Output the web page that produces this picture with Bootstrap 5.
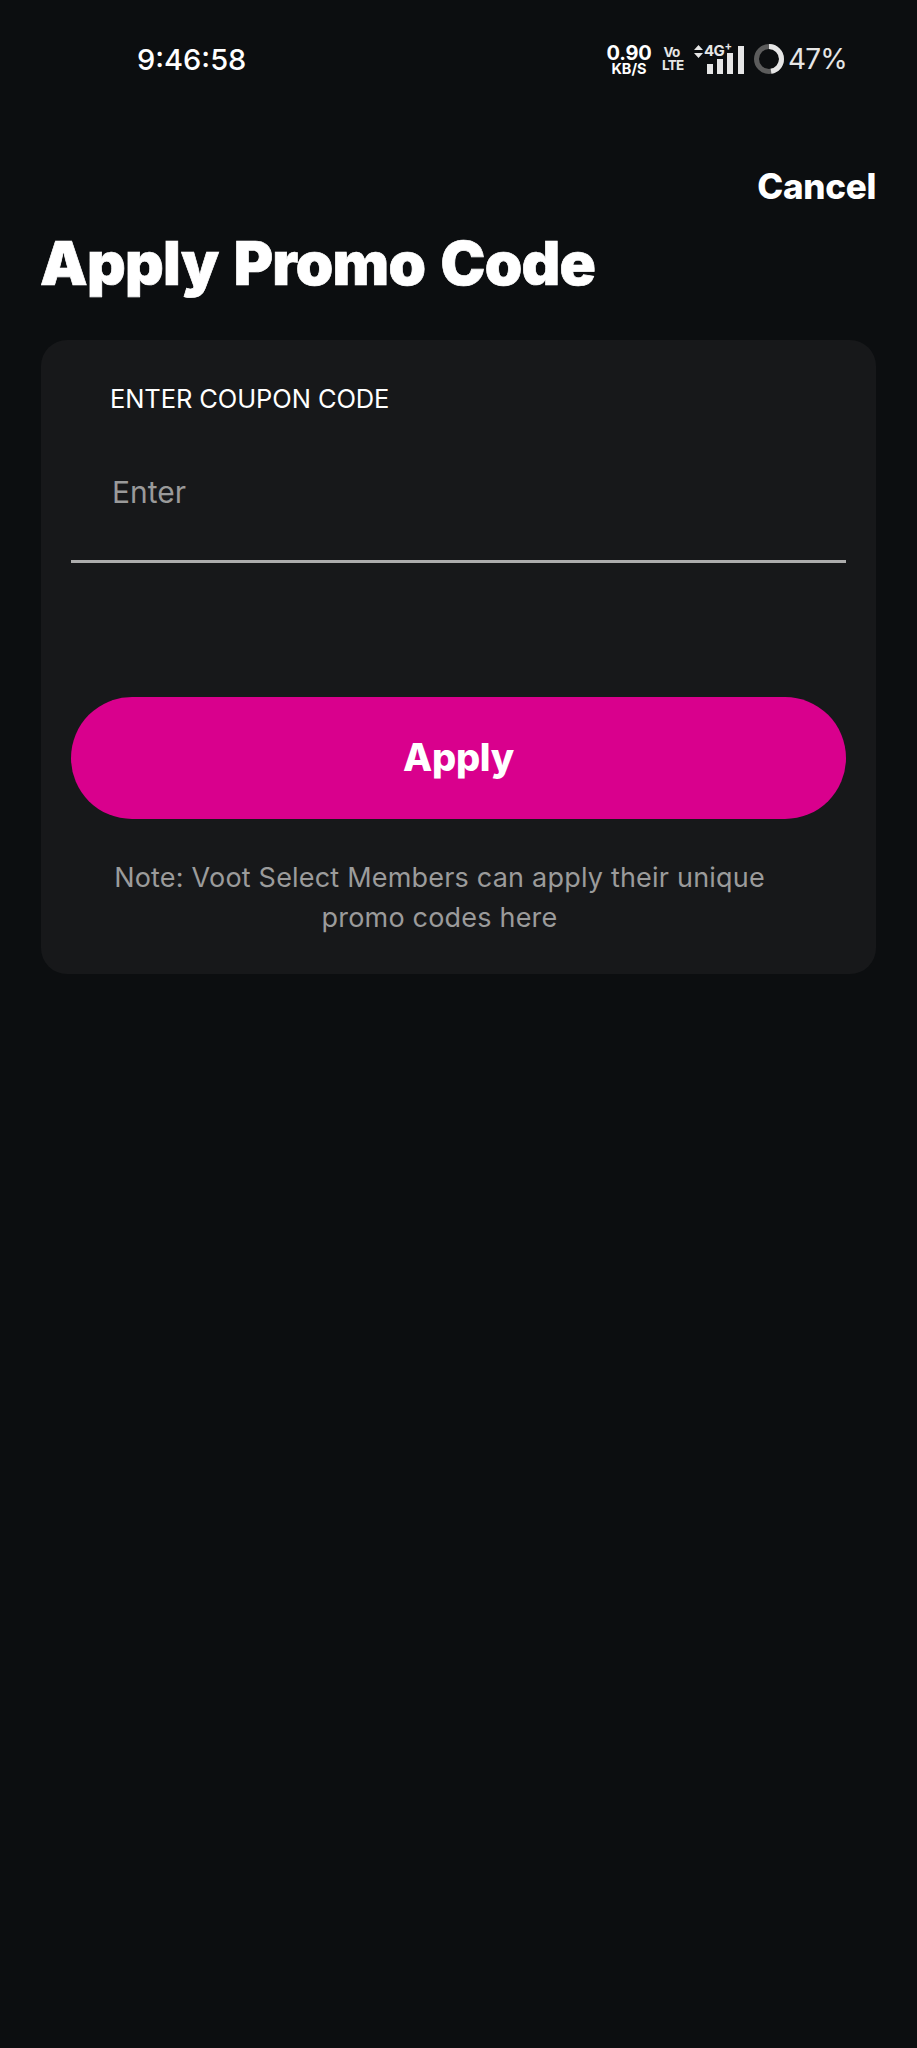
<!DOCTYPE html>
<html lang="en">
<head>
  <meta charset="UTF-8">
  <meta name="viewport" content="width=device-width, initial-scale=1.0">
  <title>Apply Promo Code</title>
  <link href="https://cdn.jsdelivr.net/npm/bootstrap@5.3.0/dist/css/bootstrap.min.css" rel="stylesheet">
  <style>
    body { background: #0c0e10; font-family: Inter, "Liberation Sans", sans-serif; color: #fff; height: 2048px; }
    .status-row { height: 118px; padding: 0 70px 0 137px; }
    .status-time { font-size: 29px; font-weight: 500; line-height: 1; margin-right: auto; }
    .stat-speed { width: 50px; text-align: center; line-height: 1; margin-right: 8px; }
    .stat-speed b { display: block; font-size: 20px; line-height: 18px; font-weight: 700; height: 18px; letter-spacing: -.2px; }
    .stat-speed span { display: block; font-size: 14.5px; line-height: 13px; font-weight: 700; }
    .stat-volte { width: 19px; text-align: center; font-size: 13.5px; font-weight: 700; line-height: 13px; margin-right: 12px; color: #e6e6e6; letter-spacing: -.7px; }
    .stat-net { width: 53px; height: 30px; }
    .stat-net-label { left: 11px; top: -1px; font-size: 15px; font-weight: 700; line-height: 16px; color: #e6e6e6; letter-spacing: -.5px; }
    .stat-battery { font-size: 28px; line-height: 1; color: #e6e6e6; margin-left: 4px; letter-spacing: -.8px; }
    .head-area { padding: 51px 41px 0 40px; }
    .cancel-link { color: #fff; font-size: 35px; font-weight: 800; line-height: 1; letter-spacing: -.3px; text-decoration: none; }
    .page-title { font-size: 60px; font-weight: 900; line-height: 1; margin: 28px 0 0; letter-spacing: -.7px; word-spacing: 4px; -webkit-text-stroke: .7px #fff; }
    .coupon-panel { margin: 47px 41px 0; height: 634px; background: #17181a; border-radius: 26px; padding: 46px 30px 0; }
    .coupon-label { display: block; font-size: 25.5px; line-height: 1; margin: 0 0 0 39px; letter-spacing: -.1px; }
    .coupon-input { background: transparent; border: 0; border-bottom: 3px solid #adadad; border-radius: 0; color: #fff; font-size: 30px; line-height: 36px; padding: 62px 41px 50px; height: auto; }
    .coupon-input::placeholder { color: #9a9a9a; opacity: 1; }
    .coupon-input:focus { background: transparent; color: #fff; box-shadow: none; border-color: #adadad; }
    .apply-btn { background: #d9008d; border: 0; border-radius: 61px; color: #fff; font-size: 38px; font-weight: 800; height: 122px; margin-top: 134px; letter-spacing: -.3px; }
    .apply-btn:hover { background: #d9008d; color: #fff; }
    .coupon-note { color: #9b9b9b; font-size: 27px; line-height: 40px; text-align: center; margin: 39px 38px 0 0; padding: 0 30px; letter-spacing: .2px; }
  </style>
</head>
<body>
  <!-- barra de estado -->
  <div class="status-row d-flex align-items-center">
    <div class="status-time">9:46:58</div>
    <div class="stat-speed"><b>0.90</b><span>KB/S</span></div>
    <div class="stat-volte">Vo<br>LTE</div>
    <div class="stat-net position-relative">
      <svg width="53" height="30" viewBox="0 0 53 30" class="d-block">
        <path d="M1 6 5.500 1 10 6ZM1 9l4.500 5L10 9Z" fill="#e6e6e6"/>
        <rect x="14" y="20" width="6" height="10" fill="#e6e6e6"/>
        <rect x="24" y="15" width="6" height="15" fill="#e6e6e6"/>
        <rect x="34" y="9" width="6" height="21" fill="#e6e6e6"/>
        <rect x="45" y="2" width="6" height="28" fill="#e6e6e6"/>
      </svg>
      <span class="stat-net-label position-absolute">4G<sup>+</sup></span>
    </div>
    <svg width="30" height="30" viewBox="0 0 30 30" class="ms-2">
      <circle cx="15" cy="15" r="12.500" fill="none" stroke="#5c5c5c" stroke-width="5"/>
      <circle cx="15" cy="15" r="12.500" fill="none" stroke="#e6e6e6" stroke-width="5" stroke-dasharray="36.900 78.500" transform="rotate(-90 15 15)"/>
    </svg>
    <div class="stat-battery">47%</div>
  </div>

  <div class="head-area">
    <div class="text-end"><a href="#" class="cancel-link">Cancel</a></div>
    <h1 class="page-title">Apply Promo Code</h1>
  </div>

  <form class="coupon-panel">
    <label for="coupon" class="coupon-label">ENTER COUPON CODE</label>
    <input type="text" id="coupon" class="form-control coupon-input" placeholder="Enter">
    <button type="button" class="btn apply-btn w-100 d-block">Apply</button>
    <p class="coupon-note">Note: Voot Select Members can apply their unique promo codes here</p>
  </form>

  <script src="https://cdn.jsdelivr.net/npm/bootstrap@5.3.0/dist/js/bootstrap.bundle.min.js"></script>
</body>
</html>
